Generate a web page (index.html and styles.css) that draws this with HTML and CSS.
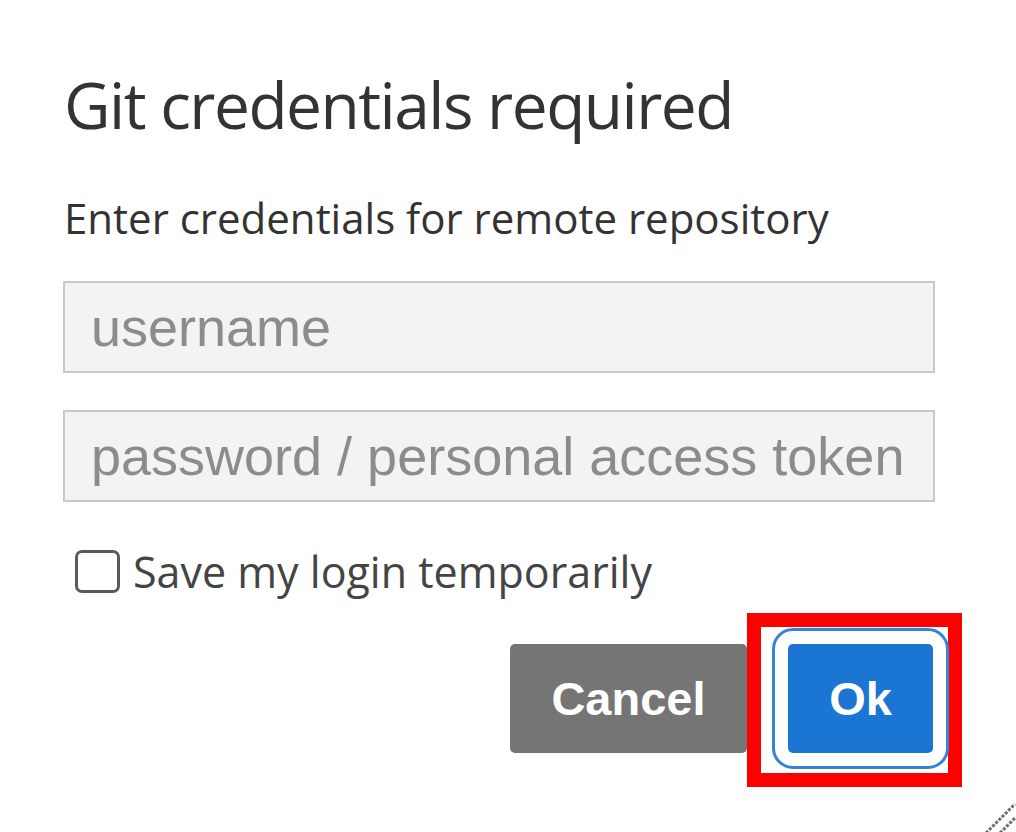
FILE: index.html
```html
<!DOCTYPE html>
<html lang="en">
<head>
  <meta charset="UTF-8" />
  <title>Git credentials required</title>
  <meta name="viewport" content="width=device-width, initial-scale=1.0" />
  <link rel="stylesheet" href="styles.css">
</head>
<body>
  <div class="dialog">
    <h1>Git credentials required</h1>
    <p class="intro">Enter credentials for remote repository</p>

    <input class="field" type="text" placeholder="username" />
    <input class="field" type="password" placeholder="password / personal access token" />

    <label class="remember">
      <input type="checkbox" />
      <span>Save my login temporarily</span>
    </label>

    <div class="actions">
      <button class="btn btn-cancel">Cancel</button>
      <span class="highlight">
        <button class="btn btn-ok">Ok</button>
      </span>
    </div>

    <!-- resize grip in the corner -->
    <svg class="grip" width="32" height="32" viewBox="0 0 32 32">
      <line x1="2" y1="33" x2="31" y2="4" stroke="#6e6e6e" stroke-width="3" stroke-dasharray="3 1.5" />
      <line x1="16" y1="33" x2="31" y2="18" stroke="#6e6e6e" stroke-width="3" stroke-dasharray="3 1.5" />
    </svg>
  </div>
</body>
</html>
```

FILE: styles.css
```css
body {
  margin: 0;
  background: #fff;
  font-family: "Open Sans", "Noto Sans", sans-serif;
}

.dialog {
  position: relative;
  box-sizing: border-box;
  min-height: 832px;
  padding: 67px 81px 0 63px;
  display: flex;
  flex-direction: column;
  overflow: hidden;
}

h1 {
  margin: 0;
  font-size: 64px;
  line-height: 76px;
  font-weight: 400;
  letter-spacing: -1.5px;
  color: #333;
  padding-left: 1px;
}

.intro {
  margin: 49px 0 0;
  font-size: 42px;
  line-height: 52px;
  color: #333;
  padding-left: 1px;
}

.field {
  box-sizing: border-box;
  width: 100%;
  height: 92px;
  margin: 37px 0 0;
  padding: 0 26px;
  border: 2px solid #c9c9c9;
  border-radius: 0;
  background: #f3f3f3;
  font-family: "Liberation Sans", Arial, sans-serif;
  font-size: 54px;
  color: #333;
  outline: none;
}

.field::placeholder {
  color: #8c8c8c;
}

.remember {
  display: flex;
  align-items: center;
  height: 52px;
  margin-top: 43px;
  padding-left: 12px;
  font-size: 43px;
  color: #444;
}

.remember input {
  appearance: none;
  box-sizing: border-box;
  width: 45px;
  height: 43px;
  margin: 0 13px 0 0;
  border: 3px solid #5a5a5a;
  border-radius: 7px;
  background: #fff;
}

.actions {
  display: flex;
  justify-content: flex-end;
  align-items: flex-start;
  margin: 16px -27px 0 0;
}

.btn {
  height: 109px;
  border: none;
  border-radius: 5px;
  color: #fff;
  font-family: "Liberation Sans", Arial, sans-serif;
  font-weight: 700;
  font-size: 47px;
  cursor: pointer;
}

.btn-cancel {
  width: 237px;
  margin-top: 31px;
  background: #757575;
}

.highlight {
  display: block;
  border: 14px solid #ff0000;
  padding: 17px 15px 20px 27px;
  background: #fff;
}

.btn-ok {
  display: block;
  width: 145px;
  background: #1a75d3;
  outline: 3px solid #3583d6;
  outline-offset: 13px;
}

.grip {
  position: absolute;
  right: 0;
  bottom: 0;
}
```
